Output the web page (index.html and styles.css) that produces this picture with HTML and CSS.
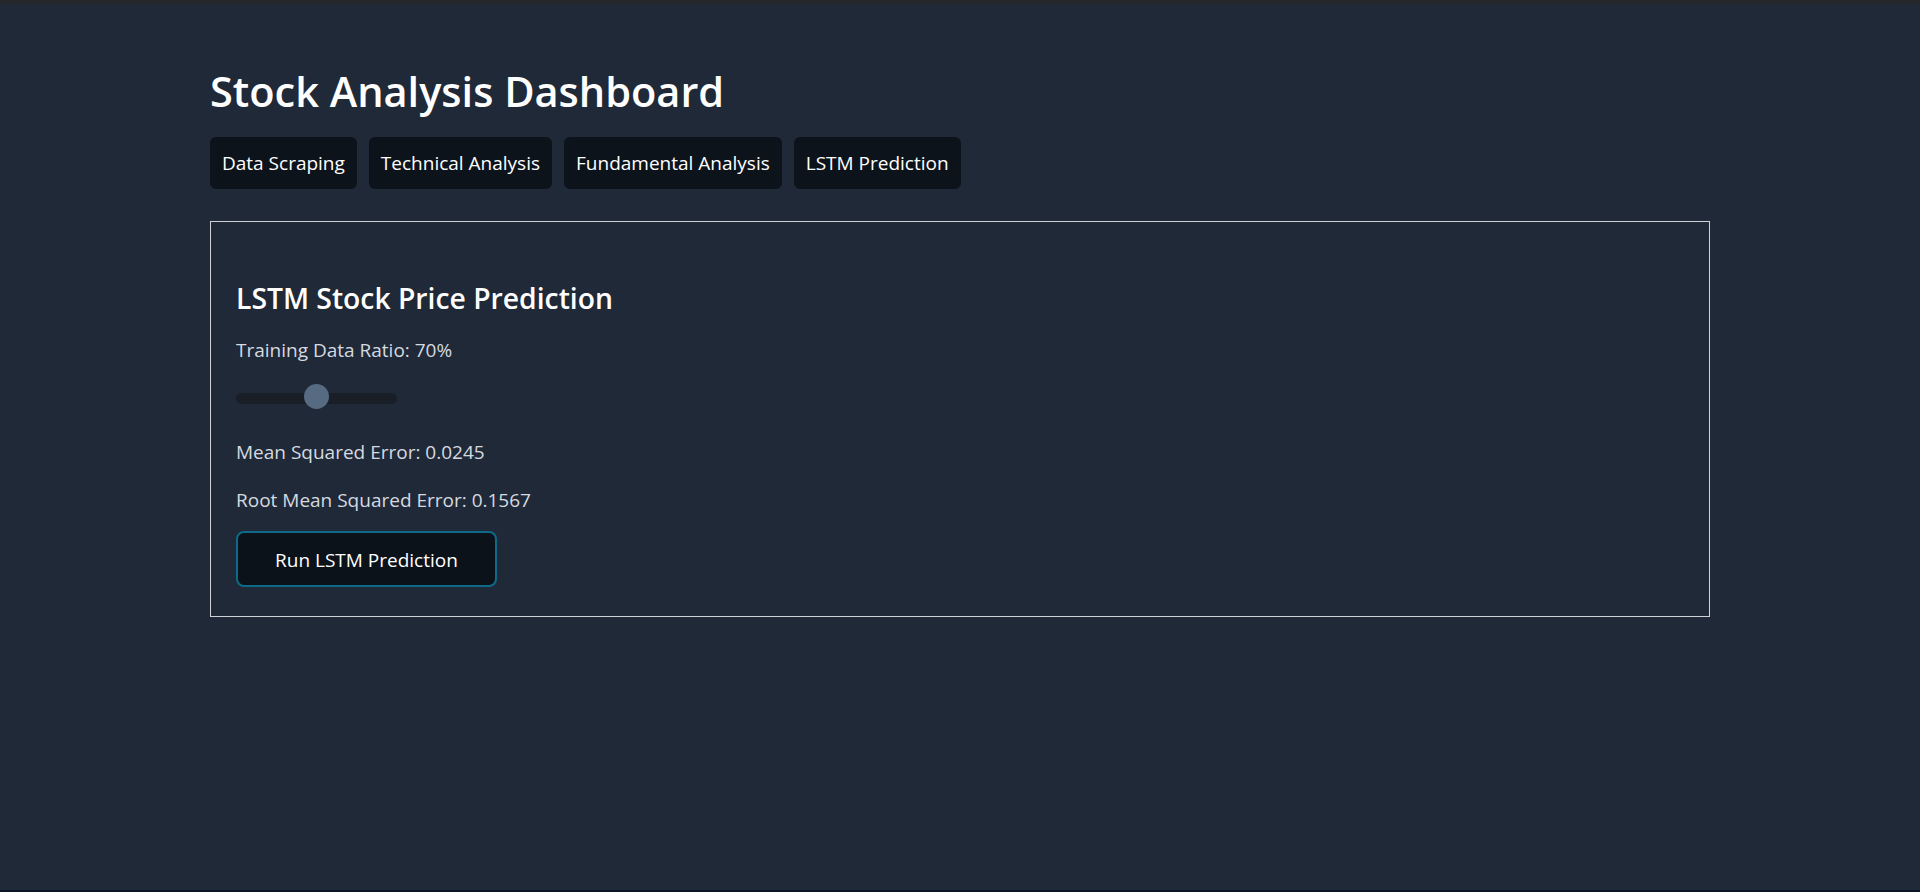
FILE: index.html
```html
<!DOCTYPE html>
<html lang="en">
<head>
<meta charset="utf-8">
<title>Stock Analysis Dashboard</title>
<link rel="stylesheet" href="styles.css">
</head>
<body>
<div class="topbar"></div>
<main class="container">
  <h1 class="title">Stock Analysis Dashboard</h1>
  <nav class="tabs">
    <button class="tab">Data Scraping</button>
    <button class="tab">Technical Analysis</button>
    <button class="tab">Fundamental Analysis</button>
    <button class="tab">LSTM Prediction</button>
  </nav>
  <section class="panel">
    <h2 class="panel-title">LSTM Stock Price Prediction</h2>
    <p class="label">Training Data Ratio: 70%</p>
    <div class="slider">
      <div class="slider-track"></div>
      <div class="slider-thumb"></div>
    </div>
    <p class="metric metric-mse">Mean Squared Error: 0.0245</p>
    <p class="metric metric-rmse">Root Mean Squared Error: 0.1567</p>
    <button class="run-btn">Run LSTM Prediction</button>
  </section>
</main>
<div class="bottombar"></div>
</body>
</html>
```
FILE: styles.css
```css
html, body {
  margin: 0;
  padding: 0;
  height: 100%;
}
body {
  background: #1f2937;
  font-family: "Open Sans", "Noto Sans", sans-serif;
  color: #ffffff;
  display: flex;
  flex-direction: column;
  overflow: hidden;
}
.topbar {
  height: 4px;
  background: #26272b;
  flex: none;
}
.bottombar {
  height: 2px;
  background: #0b1628;
  flex: none;
  margin-top: auto;
}
.container {
  width: 1500px;
  margin: 0 auto;
  padding-top: 62px;
  box-sizing: border-box;
}
.title {
  margin: 0;
  font-size: 41.5px;
  line-height: 50px;
  font-weight: 600;
  color: #ffffff;
}
.tabs {
  display: flex;
  gap: 12px;
  margin-top: 21px;
}
.tab {
  font-family: inherit;
  font-size: 19px;
  line-height: 26px;
  padding: 13px 12px;
  background: #0d131b;
  color: #ffffff;
  border: none;
  border-radius: 6px;
}
.panel {
  margin-top: 32px;
  border: 1px solid #cfd3d8;
  padding: 0 25px 29px;
  display: flex;
  flex-direction: column;
  align-items: flex-start;
}
.panel-title {
  margin: 59px 0 0;
  font-size: 28.3px;
  line-height: 34px;
  font-weight: 600;
  color: #ffffff;
}
.label, .metric {
  margin: 0;
  font-size: 19px;
  line-height: 24px;
  color: #d6dae0;
}
.label { margin-top: 23px; }
.slider {
  position: relative;
  width: 161px;
  height: 25px;
  margin-top: 22px;
}
.slider-track {
  position: absolute;
  left: 0;
  right: 0;
  top: 9px;
  height: 11px;
  border-radius: 6px;
  background: #1a1f27;
}
.slider-thumb {
  position: absolute;
  top: 0;
  left: 68px;
  width: 25px;
  height: 25px;
  border-radius: 50%;
  background: #566a82;
}
.metric-mse { margin-top: 31px; }
.metric-rmse { margin-top: 24px; }
.run-btn {
  margin-top: 19px;
  font-family: inherit;
  font-size: 19px;
  line-height: 24px;
  padding: 15px 37px 13px;
  background: #0c121a;
  color: #ffffff;
  border: 2px solid #0e6a88;
  border-radius: 8px;
}
```
